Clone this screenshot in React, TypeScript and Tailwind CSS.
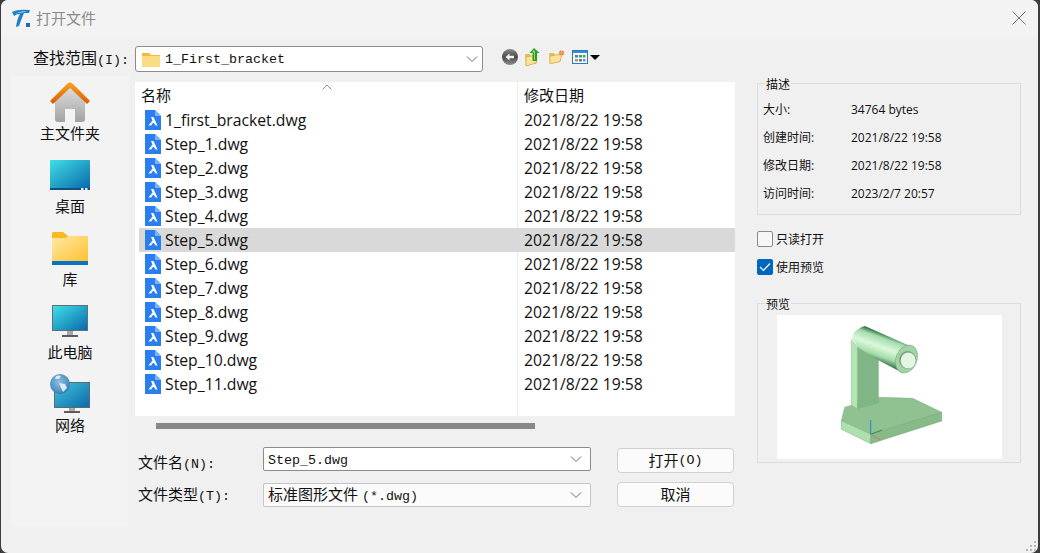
const files = [
  "1_first_bracket.dwg",
  "Step_1.dwg",
  "Step_2.dwg",
  "Step_3.dwg",
  "Step_4.dwg",
  "Step_5.dwg",
  "Step_6.dwg",
  "Step_7.dwg",
  "Step_8.dwg",
  "Step_9.dwg",
  "Step_10.dwg",
  "Step_11.dwg",
];

const details = [
  { label: "大小:", value: "34764 bytes" },
  { label: "创建时间:", value: "2021/8/22 19:58" },
  { label: "修改日期:", value: "2021/8/22 19:58" },
  { label: "访问时间:", value: "2023/2/7 20:57" },
];

const Latin = ({ children }: { children: string }) => (
  <span className="font-['Liberation_Mono',monospace] text-[13.33px]">{children}</span>
);

const Chevron = () => (
  <svg width="12" height="8" viewBox="0 0 12 8" className="shrink-0">
    <path d="M1 1.5 L6 6.5 L11 1.5" fill="none" stroke="#6a6a6a" strokeWidth="1" />
  </svg>
);

const AppLogo = () => (
  <svg width="20" height="20" viewBox="0 0 20 20" className="shrink-0">
    <path d="M1 4 Q7 1 19 2 L18 5 L13 5 Q10 12 8 18 L5 19 Q6 11 9 6 Q5 6 3 8 Z" fill="#1f7fc4" />
    <path d="M4 6 Q8 3 16 3 L12 4.500 Q7 4.500 4 6 Z" fill="#7fd0ee" />
    <rect x="15" y="15" width="4" height="4" fill="#1a6fb8" />
  </svg>
);

const DwgIcon = () => (
  <svg width="16" height="20" viewBox="0 0 16 20" className="shrink-0">
    <path d="M0 0 H10 L16 6 V20 H0 Z" fill="#2a7fee" />
    <path d="M10 0 L16 6 H10 Z" fill="#7db4f7" />
    <path d="M6 7 H8.500 L12.500 15.500 H10.500 L9 13 H8 L6 15.500 H3.500 L7.500 10.500 Z" fill="#fff" />
  </svg>
);

const HomeIcon = () => (
  <svg width="40" height="40" viewBox="0 0 40 40">
    <defs>
      <linearGradient id="houseBody" x1="0" y1="0" x2="0" y2="1">
        <stop offset="0" stopColor="#dcdcdc" />
        <stop offset="1" stopColor="#a2a2a2" />
      </linearGradient>
      <linearGradient id="houseRoof" x1="0" y1="0" x2="0" y2="1">
        <stop offset="0" stopColor="#f7a41d" />
        <stop offset="1" stopColor="#dc5c05" />
      </linearGradient>
    </defs>
    <path d="M5 19 L20 6 L35 19 V37 Q35 40 32 40 H25 V27 H15 V40 H8 Q5 40 5 37 Z" fill="url(#houseBody)" />
    <path d="M0 19 L17 2 Q20 -1 23 2 L40 19 L37 22 L20 6 L3 22 Z" fill="url(#houseRoof)" />
  </svg>
);

const DesktopIcon = () => (
  <svg width="40" height="40" viewBox="0 0 40 40">
    <defs>
      <linearGradient id="deskScreen" x1="0" y1="0" x2="1" y2="1">
        <stop offset="0" stopColor="#3fe0e4" />
        <stop offset="1" stopColor="#0a69ad" />
      </linearGradient>
    </defs>
    <path d="M1 5 H39 Q40 5 40 6 V33 H0 V6 Q0 5 1 5 Z" fill="url(#deskScreen)" />
    <rect x="0" y="33" width="40" height="2" fill="#13507c" />
    <rect x="31" y="33" width="2.500" height="2" fill="#dfe8ee" />
    <rect x="35" y="33" width="2.500" height="2" fill="#dfe8ee" />
  </svg>
);

const LibraryIcon = () => (
  <svg width="40" height="40" viewBox="0 0 40 40">
    <defs>
      <linearGradient id="libFolder" x1="0" y1="0" x2="1" y2="1">
        <stop offset="0" stopColor="#ffe9a6" />
        <stop offset="1" stopColor="#ffc12e" />
      </linearGradient>
    </defs>
    <path d="M2 5 Q2 4 4 4 H13 L18 8 H36 V36 H2 Z" fill="#fbb81f" />
    <path d="M2 10 H16 L18 8 H38 V34 H2 Z" fill="url(#libFolder)" />
    <rect x="2" y="33" width="36" height="4" fill="#0a73c4" />
  </svg>
);

const MonitorIcon = () => (
  <svg width="40" height="40" viewBox="0 0 40 40">
    <defs>
      <linearGradient id="pcScreen" x1="0" y1="0" x2="1" y2="1">
        <stop offset="0" stopColor="#3fe0e4" />
        <stop offset="1" stopColor="#0a69ad" />
      </linearGradient>
    </defs>
    <rect x="2" y="4" width="36" height="26" fill="#5f6f7a" />
    <rect x="3" y="5" width="34" height="24" fill="url(#pcScreen)" />
    <rect x="17" y="30" width="6" height="4" fill="#a8a8a8" />
    <rect x="12" y="34" width="16" height="2" fill="#5c5c5c" />
  </svg>
);

const NetworkIcon = () => (
  <svg width="40" height="40" viewBox="0 0 40 40">
    <defs>
      <linearGradient id="netScreen" x1="0" y1="0" x2="1" y2="1">
        <stop offset="0" stopColor="#42c6d8" />
        <stop offset="1" stopColor="#0a69ad" />
      </linearGradient>
      <radialGradient id="globe" cx="0.45" cy="0.4" r="0.65">
        <stop offset="0" stopColor="#8fc0e0" />
        <stop offset="0.7" stopColor="#4f93c4" />
        <stop offset="1" stopColor="#2a6d9e" />
      </radialGradient>
    </defs>
    <rect x="4" y="8" width="36" height="26" fill="#596a75" />
    <rect x="5" y="9" width="34" height="24" fill="url(#netScreen)" />
    <rect x="19" y="34" width="6" height="3" fill="#a8a8a8" />
    <rect x="14" y="37" width="16" height="2" fill="#5c5c5c" />
    <circle cx="10" cy="10" r="10" fill="url(#globe)" />
    <path d="M6 2 Q9 1 11 2 L9 5 L5 5 Z M9 9 L15 10 L17 14 L13 18 L11 14 Z" fill="#dbe9f3" />
  </svg>
);

const BackIcon = () => (
  <svg width="16" height="16" viewBox="0 0 16 16" className="shrink-0">
    <defs>
      <linearGradient id="backBall" x1="0" y1="0" x2="0" y2="1">
        <stop offset="0" stopColor="#8a8a8a" />
        <stop offset="0.5" stopColor="#4a4a4a" />
        <stop offset="1" stopColor="#8f8f8f" />
      </linearGradient>
    </defs>
    <circle cx="8" cy="8" r="8" fill="url(#backBall)" />
    <path d="M3.500 8 L7.500 4.500 V6.800 H12 V9.200 H7.500 V11.500 Z" fill="#f2f2f2" />
  </svg>
);

const UpFolderIcon = () => (
  <svg width="16" height="18" viewBox="0 0 16 18" className="shrink-0">
    <path d="M0 6 H5 L6 8 H12 V15 L1 18 Z" fill="#e5bd52" />
    <path d="M1 9 L12 7 L11 15 L1 18 Z" fill="#fbe39a" stroke="#c79c30" strokeWidth="0.6" />
    <path d="M9 0 L14.500 5 H12 V13 H7.500 V5 H4.500 Z" fill="#2f9a26" />
    <path d="M9 1.500 L7 4.500 H9 V12 H10 V4 Z" fill="#8fdc6c" />
  </svg>
);

const NewFolderIcon = () => (
  <svg width="16" height="14" viewBox="0 0 16 14" className="shrink-0">
    <path d="M0 3 H5 L6 5 H12 V11 L1 14 Z" fill="#e5bd52" />
    <path d="M1 6 L13 4 L11 11.500 L1 14 Z" fill="#fbe39a" stroke="#c79c30" strokeWidth="0.6" />
    <circle cx="12.500" cy="3" r="2.500" fill="#f0742a" />
    <path d="M12.500 0 V6 M9.500 3 H15.500" stroke="#f8c59c" strokeWidth="0.7" />
  </svg>
);

const ViewIcon = () => (
  <svg width="16" height="14" viewBox="0 0 16 14" className="shrink-0">
    <rect x="0.500" y="0.500" width="15" height="13" fill="#fff" stroke="#2a78c8" />
    <rect x="1" y="1" width="14" height="2" fill="#3c8ad8" />
    <rect x="3" y="5" width="3" height="2.500" fill="#3a7fd0" />
    <rect x="7" y="5" width="3" height="2.500" fill="#3fa648" />
    <rect x="11" y="5" width="2.500" height="2.500" fill="#3fa648" />
    <rect x="3" y="9" width="3" height="2.500" fill="#e08a2c" />
    <rect x="7" y="9" width="3" height="2.500" fill="#3a7fd0" />
    <rect x="11" y="9" width="2.500" height="2.500" fill="#8a8a8a" />
  </svg>
);

const BracketPreview = () => (
  <svg width="225" height="144" viewBox="0 0 225 144" className="block">
    <defs>
      <linearGradient id="tube" gradientUnits="userSpaceOnUse" x1="113" y1="21" x2="103" y2="49">
        <stop offset="0" stopColor="#3a7a50" />
        <stop offset="0.15" stopColor="#a4dcae" />
        <stop offset="0.45" stopColor="#dcf8dc" />
        <stop offset="0.75" stopColor="#a6dcaa" />
        <stop offset="1" stopColor="#2f6a42" />
      </linearGradient>
    </defs>
    <path d="M67.700 92.300 L102.300 82.300 L135.700 83.300 L164.700 97.300 L93.700 119.300 L64.300 105.700 Z" fill="#8fc290" stroke="#7fa983" strokeWidth="0.5" />
    <path d="M64.300 105.700 L93.700 119.300 V128.700 L64.300 114.300 Z" fill="#aee0ae" stroke="#86ad88" strokeWidth="0.5" />
    <path d="M93.700 119.300 L164.700 97.300 V106 L93.700 128.700 Z" fill="#86ba88" stroke="#7a9f7e" strokeWidth="0.5" />
    <path d="M74.300 25 L80.300 31.700 V94 L74.300 90 Z" fill="#b5e5b5" stroke="#8db590" strokeWidth="0.5" />
    <path d="M80.300 31.700 L101.700 42 V88.300 L80.300 94 Z" fill="#80b585" />
    <path d="M88 11 L138 33.300 L126.300 58.300 L94.700 41.700 L80.300 31.700 Q78 26 75 25 Q74.500 15 88 11 Z" fill="url(#tube)" />
    <ellipse cx="129.500" cy="44" rx="10.500" ry="14.500" transform="rotate(22 129.500 44)" fill="#a3d3a6" stroke="#6f9f76" strokeWidth="0.5" />
    <ellipse cx="130.700" cy="45" rx="8.500" ry="9" fill="#6f9f76" />
    <ellipse cx="131.200" cy="45.500" rx="7.500" ry="8" fill="#e2f6e2" />
    <path d="M93.700 105 V119.300" stroke="#1f88d0" strokeWidth="1" />
    <path d="M93.700 119.300 L105 115" stroke="#2f8f4a" strokeWidth="1" />
    <path d="M93.700 119.300 L104 125" stroke="#d87070" strokeWidth="1" />
  </svg>
);

const Fieldset = ({ title, className, children }: { title: string; className: string; children: React.ReactNode }) => (
  <div className={`relative border border-[#dcdcdc] ${className}`}>
    <span className="absolute left-[7px] top-[-6px] bg-[#f0f0f0] px-[1px] text-[12px] leading-[14px] text-[#111]">
      {title}
    </span>
    {children}
  </div>
);

export default function App() {
  return (
    <div className="h-[553px] w-[1040px] overflow-hidden bg-[#3c3c3c] pl-[1px] pr-[2px] font-['Open_Sans','Noto_Sans_CJK_SC',sans-serif] text-[#111]">
      <div className="flex h-full flex-col overflow-hidden rounded-[7px] bg-[#f0f0f0]">
        {/* title bar */}
        <div className="flex h-[38px] shrink-0 items-center bg-[#f3f3f3] pb-[2px] pl-[10px] pr-[12px]">
          <AppLogo />
          <span className="ml-[5px] text-[15px] leading-[20px] text-[#8a8a8a]">打开文件</span>
          <svg width="14" height="14" viewBox="0 0 14 14" className="ml-auto">
            <path d="M0.500 0.500 L13.500 13.500 M13.500 0.500 L0.500 13.500" stroke="#767676" strokeWidth="1" />
          </svg>
        </div>

        {/* look in */}
        <div className="mt-[8px] flex h-[26px] shrink-0 items-center">
          <span className="ml-[32px] w-[102px] shrink-0 whitespace-nowrap text-[16px] leading-[26px]">
            查找范围<Latin>(I):</Latin>
          </span>
          <div className="flex h-[26px] w-[348px] items-center rounded-[3px] border border-[#8c8c8c] bg-white pl-[6px] pr-[4px]">
            <svg width="18" height="15" viewBox="0 0 18 15" className="shrink-0">
              <path d="M0 1 H7 L9 3 H18 V15 H0 Z" fill="#f5b93a" />
              <rect x="0" y="4" width="18" height="11" fill="#fbdc85" />
            </svg>
            <span className="ml-[5px] mt-[2px] font-['Liberation_Mono',monospace] text-[13.33px]">1_First_bracket</span>
            <span className="ml-auto">
              <Chevron />
            </span>
          </div>
          <div className="mb-[4px] ml-[19px] flex items-center">
            <BackIcon />
            <span className="ml-[7px]">
              <UpFolderIcon />
            </span>
            <span className="ml-[8px]">
              <NewFolderIcon />
            </span>
            <span className="ml-[7px]">
              <ViewIcon />
            </span>
            <span className="ml-[2px] h-0 w-0 border-x-[5px] border-t-[5px] border-x-transparent border-t-black" />
          </div>
        </div>

        {/* main */}
        <div className="mt-[4px] flex pl-[10px]">
          {/* places */}
          <div className="h-[451px] w-[118px] shrink-0 bg-[#f3f3f3] pt-[6px]">
            {[
              { icon: <HomeIcon />, label: "主文件夹" },
              { icon: <DesktopIcon />, label: "桌面" },
              { icon: <LibraryIcon />, label: "库" },
              { icon: <MonitorIcon />, label: "此电脑" },
              { icon: <NetworkIcon />, label: "网络" },
            ].map((place) => (
              <div key={place.label} className="flex h-[73px] flex-col items-center">
                {place.icon}
                <span className="mt-[1px] text-[15px] leading-[20px]">{place.label}</span>
              </div>
            ))}
          </div>

          {/* file list + form */}
          <div className="ml-[6px] w-[600px] shrink-0 pt-[6px]">
            <div className="relative h-[334px] bg-white">
              <div className="absolute bottom-0 left-[382px] top-0 w-px bg-[#ececec]" />
              <svg width="10" height="6" viewBox="0 0 10 6" className="absolute left-[187px] top-[2px]">
                <path d="M0.500 5.500 L5 1 L9.500 5.500" fill="none" stroke="#8f8f8f" />
              </svg>
              <div className="relative flex h-[26px] items-center text-[15px]">
                <span className="ml-[6px] w-[383px]">名称</span>
                <span>修改日期</span>
              </div>
              {files.map((name) => (
                <div
                  key={name}
                  className={`relative ml-[4px] flex h-[24px] items-center text-[15.75px] leading-[24px] ${name === "Step_5.dwg" ? "bg-[#d9d9d9]" : ""}`}
                >
                  <span className="ml-[6px]">
                    <DwgIcon />
                  </span>
                  <span className="ml-[4px] w-[359px] whitespace-nowrap">{name}</span>
                  <span>2021/8/22 19:58</span>
                </div>
              ))}
            </div>
            <div className="ml-[21px] mt-[7px] h-[6px] w-[379px] bg-[#888]" />

            <div className="ml-[3px] mt-[18px] flex">
              <div className="flex w-[456px] shrink-0 flex-col gap-[12px]">
                <div className="flex h-[24px] items-center">
                  <span className="mt-[8px] w-[125px] shrink-0 whitespace-nowrap text-[15px] leading-[20px]">
                    文件名<Latin>(N):</Latin>
                  </span>
                  <div className="flex h-[24px] w-[328px] items-center rounded-[2px] border border-[#8c8c8c] bg-white pl-[4px] pr-[8px] font-['Liberation_Mono',monospace] text-[13.33px]">
                    <span className="mt-[3px]">Step_5.dwg</span>
                    <span className="ml-auto">
                      <Chevron />
                    </span>
                  </div>
                </div>
                <div className="flex h-[24px] items-center">
                  <span className="w-[125px] shrink-0 whitespace-nowrap text-[15px] leading-[20px]">
                    文件类型<Latin>(T):</Latin>
                  </span>
                  <div className="flex h-[24px] w-[328px] items-center rounded-[2px] border border-[#c4c4c4] bg-[#fbfbfb] pl-[4px] pr-[8px] text-[15px] leading-[20px]">
                    <span className="whitespace-nowrap">
                      标准图形文件 <Latin>(*.dwg)</Latin>
                    </span>
                    <span className="ml-auto">
                      <Chevron />
                    </span>
                  </div>
                </div>
              </div>
              <div className="ml-[23px] flex w-[117px] flex-col gap-[9px] pt-[1px]">
                <button className="flex h-[25px] items-center justify-center rounded-[4px] border border-[#d0d0d0] bg-[#fbfbfb] text-[15px]">
                  打开<Latin>(O)</Latin>
                </button>
                <button className="flex h-[25px] items-center justify-center rounded-[4px] border border-[#d0d0d0] bg-[#fbfbfb] text-[15px]">
                  取消
                </button>
              </div>
            </div>
          </div>

          {/* details */}
          <div className="ml-[22px] w-[264px] shrink-0 pt-[7px]">
            <Fieldset title="描述" className="h-[132px] pl-[5px] pt-[12px]">
              {details.map((row) => (
                <div key={row.label} className="flex h-[28px] items-center text-[12px]">
                  <span className="w-[88px]">{row.label}</span>
                  <span>{row.value}</span>
                </div>
              ))}
            </Fieldset>

            <div className="mt-[16px] flex h-[16px] items-center">
              <span className="h-[16px] w-[16px] rounded-[2px] border border-[#8a8a8a] bg-[#f6f6f6]" />
              <span className="ml-[3px] mt-[2px] text-[12px]">只读打开</span>
            </div>
            <div className="mt-[12px] flex h-[16px] items-center">
              <span className="flex h-[16px] w-[16px] items-center justify-center rounded-[2px] bg-[#0067c0]">
                <svg width="12" height="10" viewBox="0 0 12 10">
                  <path d="M1 5 L4.500 8.500 L11 1.500" fill="none" stroke="#fff" strokeWidth="1.200" />
                </svg>
              </span>
              <span className="ml-[3px] mt-[2px] text-[12px]">使用预览</span>
            </div>

            <Fieldset title="预览" className="mt-[28px] h-[160px] pl-[19px] pt-[11px]">
              <div className="h-[144px] w-[225px] bg-white">
                <BracketPreview />
              </div>
            </Fieldset>
          </div>
        </div>

        {/* resize grip */}
        <div className="mt-auto flex justify-end pb-[1px] pr-[1px]">
          <svg width="12" height="12" viewBox="0 0 12 12">
            <path d="M9 1h2v2h-2z M5 5h2v2h-2z M9 5h2v2h-2z M1 9h2v2h-2z M5 9h2v2h-2z M9 9h2v2h-2z" fill="#b8b8b8" />
          </svg>
        </div>
      </div>
    </div>
  );
}
